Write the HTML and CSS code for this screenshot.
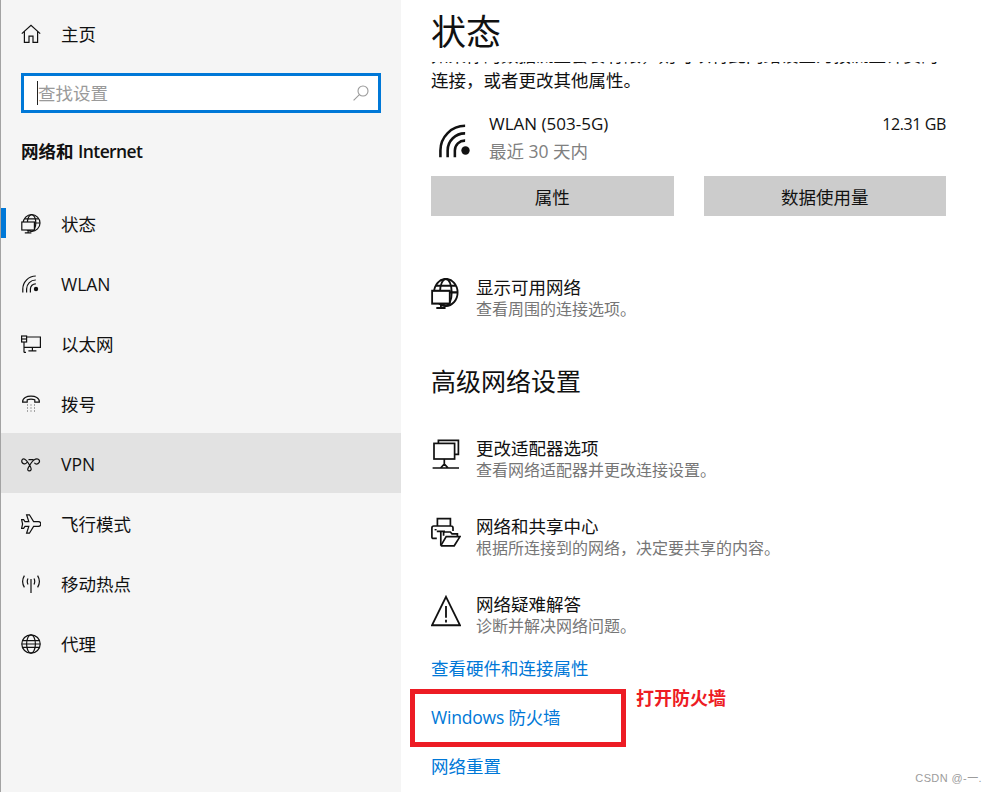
FILE: index.html
```html
<!DOCTYPE html>
<html lang="zh-CN">
<head>
<meta charset="utf-8">
<title>状态</title>
<link rel="stylesheet" href="styles.css">
</head>
<body>
<svg class="defs" width="0" height="0" aria-hidden="true">
  <symbol id="i-globe-pc" viewBox="0 0 20 20" preserveAspectRatio="none">
    <circle cx="10.6" cy="9" r="8.4"/>
    <ellipse cx="10.6" cy="9" rx="4.2" ry="8.4"/>
    <path d="M3.6 4.8H17.6M2.2 9H19"/>
    <rect class="screen" x=".8" y="8" width="12.6" height="8"/>
    <path d="M7.1 16V18.6M3.8 18.8H10.4"/>
  </symbol>
  <symbol id="i-home" viewBox="0 0 20 20"><path d="M.8 9.6 10 1.2l9.2 8.4M3.4 7.6V18.4H8V12.2H12V18.4H16.6V7.6"/></symbol>
  <symbol id="i-wifi" viewBox="0 0 20 20">
    <path d="M9.4 18.6V15A5.2 5.2 0 0 1 14.8 9.8M5.6 18.6V15A9 9 0 0 1 14.8 6M1.8 18.6V15A13 13 0 0 1 14.8 2"/>
    <circle class="solid" cx="15" cy="15" r="2.2"/>
  </symbol>
  <symbol id="i-eth" viewBox="0 0 20 20">
    <path d="M5 3H19.4V13.4H3M3 8V18.4M3 18.4H5M11.4 13.4V16.6M7.4 16.8H15.4"/>
    <rect x=".6" y="2" width="5" height="6"/>
    <path d="M.6 5H5.6"/>
  </symbol>
  <symbol id="i-dial" viewBox="0 0 20 20">
    <path d="M1.6 8.2C1.4 3.6 6 2.2 10 2.2s8.6 1.4 8.4 6H13.8V5.8C11.6 5 8.4 5 6.2 5.8V8.2Z"/>
    <path class="dots" d="M6 11H7M9.5 11H10.5M13 11H14M6 14H7M9.5 14H10.5M13 14H14M6 17H7M9.5 17H10.5M13 17H14"/>
  </symbol>
  <symbol id="i-vpn" viewBox="0 0 20 20">
    <path d="M6 8.2C5 10 2.8 10.5 1.5 9S.6 4.9 2.8 4.9c2 0 4 3.2 6 6.6 1.2 2 1.9 3.2 1.2 4.4s-2.6 1.2-3.2 0 .9-3 3.2-6.6c2.2-3.4 4-4.4 6-4.4s3.2 2 2 3.8-3.6 1.7-4.6.1M7.5 5.6H12.5"/>
  </symbol>
  <symbol id="i-plane" viewBox="0 0 20 20">
    <path d="M5.6.8H8.4L12.6 7.6H17.4C19 7.6 19.8 9 19.8 10S19 12.4 17.4 12.4H12.6L8.4 19.2H5.6L7.8 12.4H4L2.6 14.4H.6L1.6 10 .6 5.6H2.6L4 7.6H7.8Z"/>
  </symbol>
  <symbol id="i-hotspot" viewBox="0 0 20 20">
    <path d="M10 5V19M7 4.6C6 6.6 6 8.4 7 10.4M13 4.6C14 6.6 14 8.4 13 10.4M3.4 1.6C1.2 5.2 1.2 9.8 3.4 13.4M16.6 1.6C18.8 5.2 18.8 9.8 16.6 13.4"/>
  </symbol>
  <symbol id="i-proxy" viewBox="0 0 20 20">
    <circle cx="10" cy="10" r="9.2"/>
    <ellipse cx="10" cy="10" rx="4.4" ry="9.2"/>
    <path d="M1.6 6.6H18.4M.8 10H19.2M1.6 13.4H18.4"/>
  </symbol>
  <symbol id="i-adapter" viewBox="-2 0 30 32">
    <path d="M5.4 4V1.4H25.4V15.4H21.6"/>
    <rect x="1" y="4.4" width="20.6" height="15.6"/>
    <path d="M11.3 20V25M-.4 29H26M7.6 29 11.3 25 15 29Z"/>
  </symbol>
  <symbol id="i-share" viewBox="0 0 30 32">
    <path d="M6.4 9V1.6H19.4V9M5.8 21.4H2.4C1.4 21.4.9 20.9.9 20V11C.9 9.8 1.6 9 2.8 9H20C21.4 9 22 9.8 22 11V14"/>
    <path d="M5.8 14.4H14M9.8 15V28.8"/>
    <path d="M9.8 28.8H23.2L29 19.6H15.2L10 28.4M12.6 18.8V15H19.4L21 16.8H26.4V19.4"/>
    <rect class="solid" x="3.6" y="12" width="2" height="1.4"/>
  </symbol>
  <symbol id="i-warn" viewBox="0 0 28 28" preserveAspectRatio="none">
    <path d="M14 1.6 27 26.4H1Z"/>
    <path d="M14 9.6V20M14 21.6V24"/>
  </symbol>
</svg>

<div class="app">
  <aside class="side">
    <a class="nav-row home"><svg class="ico"><use href="#i-home"/></svg><span>主页</span></a>
    <div class="search">
      <span class="placeholder">查找设置</span>
      <svg class="search-ico" viewBox="0 0 16 16"><circle cx="10" cy="6" r="5"/><path d="M6.4 9.6.6 15.4"/></svg>
    </div>
    <div class="side-title">网络和 <span class="narrow">Internet</span></div>
    <nav class="nav">
      <a class="nav-row current"><svg class="ico"><use href="#i-globe-pc"/></svg><span>状态</span></a>
      <a class="nav-row"><svg class="ico"><use href="#i-wifi"/></svg><span>WLAN</span></a>
      <a class="nav-row"><svg class="ico"><use href="#i-eth"/></svg><span>以太网</span></a>
      <a class="nav-row"><svg class="ico"><use href="#i-dial"/></svg><span>拨号</span></a>
      <a class="nav-row hovered"><svg class="ico"><use href="#i-vpn"/></svg><span>VPN</span></a>
      <a class="nav-row"><svg class="ico"><use href="#i-plane"/></svg><span>飞行模式</span></a>
      <a class="nav-row"><svg class="ico"><use href="#i-hotspot"/></svg><span>移动热点</span></a>
      <a class="nav-row"><svg class="ico"><use href="#i-proxy"/></svg><span>代理</span></a>
    </nav>
  </aside>

  <main class="main">
    <h1 class="page-title">状态</h1>
    <div class="desc-clip">
      <p class="desc">如果你的数据流量套餐有限，则可以将此网络设置为按流量计费的连接，或者更改其他属性。</p>
    </div>

    <div class="network">
      <svg class="net-ico"><use href="#i-wifi"/></svg>
      <div class="net-text">
        <div class="net-name">WLAN (503-5G)</div>
        <div class="net-sub">最近 30 天内</div>
      </div>
      <div class="net-usage">12.31 GB</div>
    </div>

    <div class="buttons">
      <button class="btn">属性</button>
      <button class="btn">数据使用量</button>
    </div>

    <a class="option first">
      <svg class="opt-ico thin"><use href="#i-globe-pc"/></svg>
      <div><div class="opt-title">显示可用网络</div><div class="opt-sub">查看周围的连接选项。</div></div>
    </a>

    <h2 class="section-title">高级网络设置</h2>

    <a class="option adapter">
      <svg class="opt-ico"><use href="#i-adapter"/></svg>
      <div><div class="opt-title">更改适配器选项</div><div class="opt-sub">查看网络适配器并更改连接设置。</div></div>
    </a>
    <a class="option">
      <svg class="opt-ico"><use href="#i-share"/></svg>
      <div><div class="opt-title">网络和共享中心</div><div class="opt-sub">根据所连接到的网络，决定要共享的内容。</div></div>
    </a>
    <a class="option">
      <svg class="opt-ico"><use href="#i-warn"/></svg>
      <div><div class="opt-title">网络疑难解答</div><div class="opt-sub">诊断并解决网络问题。</div></div>
    </a>

    <a class="link link-hw">查看硬件和连接属性</a>
    <a class="link link-fw">Windows 防火墙</a>
    <a class="link link-reset">网络重置</a>
  </main>
</div>

<div class="callout-box"></div>
<div class="callout-text">打开防火墙</div>
<div class="watermark">CSDN @-一.</div>
</body>
</html>
```
FILE: styles.css
```css
* { box-sizing: border-box; }
html, body { margin: 0; height: 792px; overflow: hidden; background: #fff; }
body {
  position: relative;
  font-family: "Open Sans", "Noto Sans CJK SC", sans-serif;
  color: #111;
}
.defs { position: absolute; }
.ico, .net-ico, .opt-ico, .search-ico {
  fill: none;
  stroke: #111;
  stroke-width: 1.2;
}
.ico { color: #f5f5f5; }
.opt-ico { color: #fff; }
.screen { fill: currentColor; }
.solid { fill: #111; stroke: none; }
.dots { stroke-width: 1.1; stroke: #555; }

.app { display: flex; height: 792px; }

/* sidebar */
.side {
  width: 401px;
  flex: none;
  background: #f5f5f5;
  border-left: 1px solid #a3a3a3;
  padding-top: 4px;
}
.nav-row {
  display: flex;
  align-items: center;
  height: 60px;
  padding-left: 20px;
  padding-top: 1px;
  font-size: 17.5px;
  line-height: 24px;
  color: #111;
  position: relative;
}
.nav-row.home { padding-top: 0; }
.ico { width: 20px; height: 20px; margin-right: 20px; flex: none; }
.search {
  margin: 9px 20px 0 20px;
  height: 40px;
  border: 3px solid #0078d7;
  background: #fff;
  display: flex;
  align-items: center;
  justify-content: space-between;
  padding: 0 9px 0 13px;
}
.placeholder {
  border-left: 1px solid #222;
  height: 24px;
  line-height: 24px;
  font-size: 17.5px;
  color: #9a9a9a;
}
.search-ico { width: 16px; height: 16px; stroke: #9a9a9a; stroke-width: 1.1; }
.side-title {
  margin: 26px 0 0 20px;
  font-size: 17.5px;
  line-height: 24px;
  font-weight: 600;
  color: #111;
}
.narrow { letter-spacing: -.6px; }
.nav { margin-top: 30px; }
.current::before {
  content: "";
  position: absolute;
  left: 0;
  top: 15px;
  width: 5px;
  height: 30px;
  background: #0078d7;
}
.hovered { background: #e2e2e2; }

/* main */
.main {
  flex: 1;
  min-width: 0;
  padding: 0 40px 0 30px;
}
.page-title {
  margin: 0;
  height: 62px;
  font-size: 35px;
  line-height: 64px;
  font-weight: 400;
  color: #111;
}
.desc-clip { height: 33px; overflow: hidden; }
.desc {
  margin: -19px 0 0;
  font-size: 17.5px;
  line-height: 25px;
  color: #111;
}
.network {
  display: flex;
  margin-top: 16px;
  height: 53px;
}
.net-ico { width: 38px; height: 38px; margin: 11px 14px 0 6px; flex: none; stroke-width: 1.35; }
.net-text { flex: 1; }
.net-name { font-size: 17px; line-height: 26px; color: #111; }
.net-sub { font-size: 17.5px; line-height: 27px; color: #808080; margin-top: 1px; }
.net-usage { font-size: 16px; line-height: 26px; letter-spacing: -.4px; color: #111; }

.buttons {
  display: grid;
  grid-template-columns: 1fr 1fr;
  column-gap: 30px;
  margin-top: 12px;
}
.btn {
  height: 40px;
  border: 0;
  padding: 0;
  background: #ccc;
  font: inherit;
  font-size: 17.5px;
  color: #111;
}
.option { display: flex; margin-top: 34px; height: 44px; }
.option.first { margin-top: 60px; }
.option.adapter { margin-top: 39px; }
.opt-ico { width: 30px; height: 32px; margin-right: 15px; flex: none; stroke-width: 1.7; margin-top: 2px; }
.opt-ico.thin { width: 28px; margin-right: 17px; stroke-width: 1.3; }
.opt-title { font-size: 17.5px; line-height: 23px; color: #111; }
.opt-sub { font-size: 16px; line-height: 20px; color: #767676; }
.section-title {
  margin: 44px 0 0;
  font-size: 25px;
  line-height: 34px;
  font-weight: 400;
  color: #111;
}
.link { display: block; font-size: 17.5px; line-height: 24px; color: #0078d7; }
.link-hw { margin-top: 19px; }
.link-fw { margin-top: 25px; letter-spacing: -.2px; }
.link-reset { margin-top: 25px; }

/* annotations drawn over the screenshot */
.callout-box {
  position: absolute;
  left: 410px;
  top: 689px;
  width: 216px;
  height: 58px;
  border: 5px solid #ed1c24;
}
.callout-text {
  position: absolute;
  left: 636px;
  top: 686px;
  font-size: 18px;
  line-height: 24px;
  font-weight: 700;
  color: #ed1c24;
}
.watermark {
  position: absolute;
  right: 4px;
  top: 771px;
  font-size: 11px;
  line-height: 14px;
  letter-spacing: .4px;
  color: #9c9c9c;
  font-family: "Liberation Sans", "Noto Sans CJK SC", sans-serif;
}
```
